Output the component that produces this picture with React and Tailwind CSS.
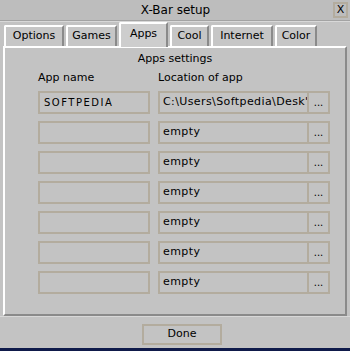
import React from "react";

const font = { fontFamily: '"DejaVu Sans", Verdana, sans-serif' };

function Tab({ label, w, active }) {
  return (
    <div
      className={
        "flex items-center justify-center border-l-2 border-t-2 border-r-2 border-l-white border-t-white border-r-[#8a8a8a] rounded-tl-[2px] text-[11px] text-black " +
        (active ? "h-[25px] bg-[#cdcdcd] -mb-[1px] z-10 pb-[2px]" : "h-[21px] bg-[#c6c6c6]")
      }
      style={{ width: w }}
    >
      {label}
    </div>
  );
}

function Row({ name, loc }) {
  return (
    <div className="flex h-[23px] items-stretch">
      <div className="w-[112px] border-2 border-[#b3ac9e] flex items-center pl-[4px] text-[10px] tracking-[1.5px] text-black">
        {name}
      </div>
      <div className="ml-[8px] w-[151px] border-2 border-[#b3ac9e] flex items-center pl-[3px] text-[11px] tracking-[0.4px] text-black overflow-hidden whitespace-nowrap">
        {loc}
      </div>
      <div className="w-[21px] border-2 border-l-0 border-[#b3ac9e] flex items-center justify-center text-[10px] text-black">
        ...
      </div>
    </div>
  );
}

export default function App() {
  const rows = [
    ["SOFTPEDIA", "C:\\Users\\Softpedia\\Desk'"],
    ["", "empty"],
    ["", "empty"],
    ["", "empty"],
    ["", "empty"],
    ["", "empty"],
    ["", "empty"],
  ];
  return (
    <div className="w-[350px] h-[351px] bg-[#c3c3c3] flex flex-col overflow-hidden" style={font}>
      <div className="h-[21px] bg-[#bdbdbd] border-b border-[#a3a3a3] flex items-center justify-between">
        <div className="w-[16px] ml-[2px]" />
        <div className="text-[12px] text-black">X-Bar setup</div>
        <div className="w-[15px] h-[16px] mr-[2px] border-2 border-[#b3ac9e] flex items-center justify-center text-[11px] text-black">
          X
        </div>
      </div>
      <div className="h-[25px] flex items-end gap-[2px] pl-[4px] border-t border-[#d8d8d8]">
        <Tab label="Options" w={60} />
        <Tab label="Games" w={51} />
        <Tab label="Apps" w={49} active />
        <Tab label="Cool" w={39} />
        <Tab label="Internet" w={62} />
        <Tab label="Color" w={42} />
      </div>
      <div className="mx-[3px] h-[270px] border-l-2 border-t-2 border-l-white border-t-white border-r-2 border-b-2 border-r-[#8a8a8a] border-b-[#8a8a8a] flex flex-col">
        <div className="text-center text-[11px] text-black mt-[4px] h-[14px] leading-[14px]">Apps settings</div>
        <div className="flex text-[11px] text-black mt-[5px] pl-[33px] h-[14px] leading-[14px]">
          <div className="w-[120px]">App name</div>
          <div>Location of app</div>
        </div>
        <div className="flex flex-col gap-[7px] pl-[33px] mt-[6px]">
          {rows.map((r, i) => (
            <Row key={i} name={r[0]} loc={r[1]} />
          ))}
        </div>
      </div>
      <div className="flex-1 flex items-start justify-center pt-[7px] border-t border-[#d8d8d8]">
        <div className="ml-[14px] w-[80px] h-[21px] border-2 border-[#b3ac9e] flex items-center justify-center text-[11px] text-black">
          Done
        </div>
      </div>
      <div className="h-[3px] bg-[#0f1a4a]" />
    </div>
  );
}
